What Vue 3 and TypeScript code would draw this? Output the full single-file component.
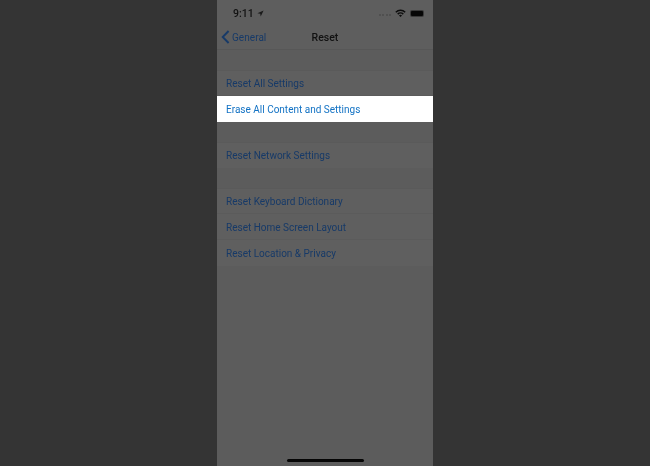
<script setup lang="ts">
const groups = [
  [
    { label: "Reset All Settings" },
    { label: "Erase All Content and Settings", active: true },
  ],
  [{ label: "Reset Network Settings" }],
  [
    { label: "Reset Keyboard Dictionary" },
    { label: "Reset Home Screen Layout" },
    { label: "Reset Location & Privacy" },
  ],
];
</script>

<template>
  <div class="page">
    <div class="phone">
      <header class="top">
        <div class="status">
          <span class="time">9:11</span>
          <svg class="arrow" width="7" height="7" viewBox="0 0 7 7">
            <path d="M6.6.4 3.7 6.6 3.2 3.8.4 3.3Z" fill="#1a1a1a" />
          </svg>
          <span class="spacer"></span>
          <span class="signal"><i v-for="n in 4" :key="n"></i></span>
          <svg class="wifi" width="11" height="8" viewBox="0 0 11 8">
            <path d="M.3 2.7a7.2 7.2 0 0 1 10.4 0L9.7 3.8a5.8 5.8 0 0 0-8.4 0Z" fill="#0c0c0c" />
            <path d="M2.2 4.6a4.6 4.6 0 0 1 6.6 0L7.8 5.7a3.2 3.2 0 0 0-4.6 0Z" fill="#0c0c0c" />
            <path d="M4 6.4a2.1 2.1 0 0 1 3 0L5.5 8Z" fill="#0c0c0c" />
          </svg>
          <span class="battery"><b></b></span>
        </div>
        <nav class="nav">
          <div class="back">
            <svg width="9" height="14" viewBox="0 0 9 14">
              <path d="M7.6 1 1.7 7l5.9 6" fill="none" stroke="#173a68" stroke-width="1.9" />
            </svg>
            <span>General</span>
          </div>
          <div class="title">Reset</div>
        </nav>
      </header>

      <main class="list">
        <section v-for="(group, i) in groups" :key="i" class="group">
          <div
            v-for="row in group"
            :key="row.label"
            class="row"
            :class="{ active: row.active }"
          >
            {{ row.label }}
          </div>
        </section>
      </main>

      <div class="home"></div>
    </div>
  </div>
</template>

<style>
html,
body {
  margin: 0;
  background: #343434;
}
</style>

<style scoped>
.page {
  width: 650px;
  height: 466px;
  display: flex;
  justify-content: center;
  overflow: hidden;
  background: #343434;
  font-family: Roboto, "Liberation Sans", Arial, sans-serif;
}

.phone {
  position: relative;
  width: 216px;
  height: 466px;
  background: #5c5c5c;
  filter: blur(0.3px);
}

.top {
  height: 50px;
  box-sizing: border-box;
  border-bottom: 1px solid #575757;
  background: #5e5e5e;
}

.status {
  height: 25px;
  display: flex;
  align-items: center;
  padding: 1px 9px 0 16px;
  box-sizing: border-box;
  color: #111;
}

.time {
  font-size: 10.5px;
  font-weight: 500;
}

.arrow {
  margin-left: 3px;
}

.spacer {
  flex: 1;
}

.signal {
  display: flex;
  gap: 1.5px;
  margin: 3px 4px 0 0;
}

.signal i {
  width: 2px;
  height: 2px;
  border-radius: 50%;
  background: #4c4c4c;
}

.wifi {
  margin-right: 4px;
}

.battery {
  width: 14px;
  height: 7px;
  box-sizing: border-box;
  padding: 1px;
  border-radius: 2px;
  background: #3a3a3a;
}

.battery b {
  display: block;
  height: 100%;
  border-radius: 1px;
  background: #060606;
}

.nav {
  position: relative;
  height: 24px;
  display: flex;
  align-items: center;
  justify-content: center;
}

.back {
  position: absolute;
  left: 4px;
  top: 5px;
  display: flex;
  align-items: center;
  gap: 2px;
  color: #173a68;
  font-size: 10px;
  letter-spacing: 0.05px;
}

.title {
  color: #111;
  font-size: 10.5px;
  font-weight: 500;
  padding-top: 1px;
}

.list {
  display: flex;
  flex-direction: column;
  gap: 20px;
  padding-top: 20px;
}

.group {
  background: #5f5f5f;
  box-shadow: inset 0 1px 0 #5a5a5a;
}

.row {
  height: 26px;
  box-sizing: border-box;
  display: flex;
  align-items: center;
  padding: 1px 0 0 9px;
  color: #173a68;
  font-size: 10px;
  box-shadow: inset 0 -1px 0 #5b5b5b;
}

.row:last-child {
  box-shadow: none;
}

.row.active {
  background: #fff;
  color: #1272c4;
  box-shadow: none;
}

.home {
  position: absolute;
  left: 70px;
  bottom: 4px;
  width: 77px;
  height: 3px;
  border-radius: 2px;
  background: #050505;
}
</style>
